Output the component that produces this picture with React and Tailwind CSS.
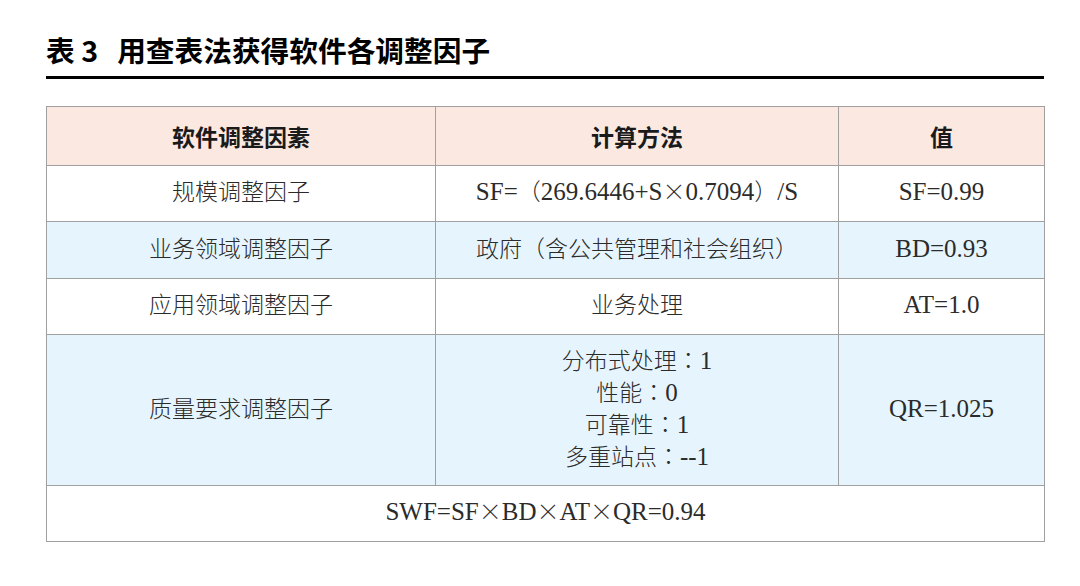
export default function App() {
  const body = "font-['Liberation_Serif','Noto_Sans_CJK_SC',serif] font-light text-[23px] text-[#2b2b2b]";
  const cell = "border border-[#a0a0a0]";
  // Latin runs sit a touch larger than the CJK text in the reference
  const L = ({ children }) => <span className="text-[25px] leading-none">{children}</span>;
  const x = <span className="font-['Noto_Sans_CJK_SC',sans-serif] leading-none">×</span>;
  // centred full-width colon
  const c = <span className="font-['Noto_Sans_CJK_TC',sans-serif] leading-none">：</span>;

  return (
    <div className="w-[1080px] h-[586px] bg-white pt-[31px] pl-[46px]">
      <h1 className="font-['Noto_Sans_CJK_SC',sans-serif] font-bold text-[28.7px] leading-[38px] text-black">
        表 3<span className="inline-block w-[19px]" />用查表法获得软件各调整因子
      </h1>
      <div className="w-[998px] h-[3px] bg-black mt-[7px]" />

      <table className={`mt-[27px] w-[998px] border-collapse table-fixed text-center ${body}`}>
        <colgroup>
          <col className="w-[389px]" />
          <col className="w-[403px]" />
          <col className="w-[206px]" />
        </colgroup>
        <thead>
          <tr className="h-[59px] bg-[#fbe9e1] font-['Noto_Sans_CJK_SC',sans-serif] text-[23px] text-[#1a1a1a]">
            <th className={`${cell} font-bold`}>软件调整因素</th>
            <th className={`${cell} font-bold`}>计算方法</th>
            <th className={`${cell} font-bold`}>值</th>
          </tr>
        </thead>
        <tbody>
          <tr className="h-[56px] bg-white">
            <td className={cell}>规模调整因子</td>
            <td className={cell}>
              <L>SF=</L>（<L>269.6446+S</L>{x}<L>0.7094</L>）<L>/S</L>
            </td>
            <td className={cell}><L>SF=0.99</L></td>
          </tr>
          <tr className="h-[57px] bg-[#e6f5fd]">
            <td className={cell}>业务领域调整因子</td>
            <td className={cell}>政府（含公共管理和社会组织）</td>
            <td className={cell}><L>BD=0.93</L></td>
          </tr>
          <tr className="h-[56px] bg-white">
            <td className={cell}>应用领域调整因子</td>
            <td className={cell}>业务处理</td>
            <td className={cell}><L>AT=1.0</L></td>
          </tr>
          <tr className="h-[151px] bg-[#e6f5fd]">
            <td className={cell}>质量要求调整因子</td>
            <td className={cell}>
              <div className="h-[32px] leading-[32px]">分布式处理{c}<L>1</L></div>
              <div className="h-[32px] leading-[32px]">性能{c}<L>0</L></div>
              <div className="h-[32px] leading-[32px]">可靠性{c}<L>1</L></div>
              <div className="h-[32px] leading-[32px]">多重站点{c}<L>--1</L></div>
            </td>
            <td className={cell}><L>QR=1.025</L></td>
          </tr>
          <tr className="h-[56px] bg-white">
            <td colSpan={3} className={cell}>
              <L>SWF=SF</L>{x}<L>BD</L>{x}<L>AT</L>{x}<L>QR=0.94</L>
            </td>
          </tr>
        </tbody>
      </table>
    </div>
  );
}
